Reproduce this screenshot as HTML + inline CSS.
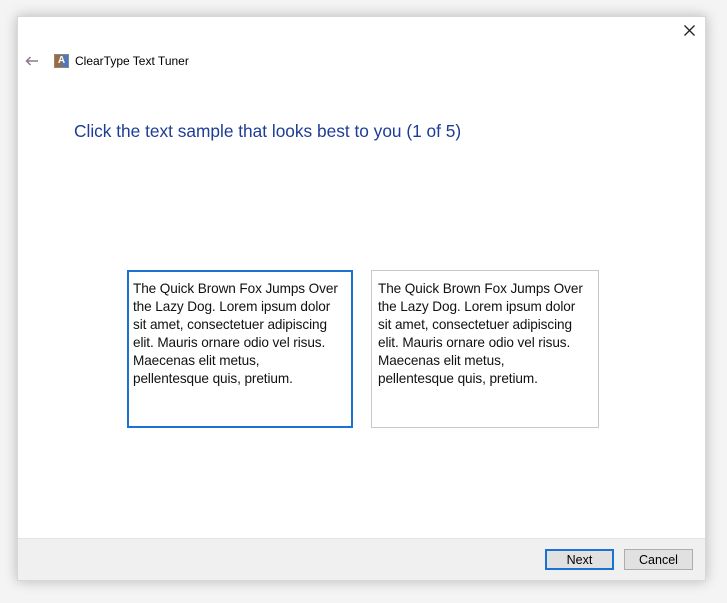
<!DOCTYPE html>
<html><head><style>
body{margin:0;width:727px;height:603px;background:#f4f4f4;position:relative;overflow:hidden;font-family:"Liberation Sans",sans-serif}
.win{position:absolute;left:17px;top:16px;width:689px;height:565px;background:#fff;box-shadow:0 0 12px rgba(0,0,0,.25);border:1px solid #d8d8d8;box-sizing:border-box}
.foot{position:absolute;left:0;right:0;bottom:0;height:41px;background:#f0f0f0;border-top:1px solid #e3e3e3}
.t{position:absolute;white-space:nowrap}
.box{position:absolute;top:270px;height:158px;box-sizing:border-box;padding:9px 0 0 5px;font-size:13.6px;line-height:18px;color:#111;white-space:nowrap;letter-spacing:-0.1px}
.btn{position:absolute;top:549px;width:69px;height:21px;box-sizing:border-box;background:#e1e1e1;font-size:12.5px;text-align:center;line-height:18px;color:#000}
</style></head><body>
<div class="win"><div class="foot"></div></div>
<svg style="position:absolute;left:684px;top:25px" width="11" height="11"><path d="M0.5 0.5L10.5 10.5M10.5 0.5L0.5 10.5" stroke="#222" stroke-width="1.3"/></svg>
<svg style="position:absolute;left:25px;top:56px" width="14" height="10"><path d="M13 5H1.5M5.5 1L1.5 5L5.5 9" stroke="#8a7a8a" stroke-width="1.5" fill="none"/></svg>
<div style="position:absolute;left:54px;top:54px;width:13px;height:12px;background:linear-gradient(90deg,#b5651d,#3a7bd5);border:1px solid #888;color:#fff;font-size:10px;font-weight:bold;text-align:center;line-height:12px">A</div>
<div class="t" style="left:75px;top:54px;font-size:12px;color:#000">ClearType Text Tuner</div>
<div class="t" style="left:74px;top:121px;font-size:17.3px;color:#1e3c96">Click the text sample that looks best to you (1 of 5)</div>
<div class="box" style="left:127px;width:226px;border:2px solid #1a73d2;padding-left:4px;padding-top:8px">The Quick Brown Fox Jumps Over<br>the Lazy Dog. Lorem ipsum dolor<br>sit amet, consectetuer adipiscing<br>elit. Mauris ornare odio vel risus.<br>Maecenas elit metus,<br>pellentesque quis, pretium.</div>
<div class="box" style="left:371px;width:228px;border:1px solid #c8c8c8;padding-left:6px">The Quick Brown Fox Jumps Over<br>the Lazy Dog. Lorem ipsum dolor<br>sit amet, consectetuer adipiscing<br>elit. Mauris ornare odio vel risus.<br>Maecenas elit metus,<br>pellentesque quis, pretium.</div>
<div class="btn" style="left:545px;border:2px solid #1a73d2;line-height:19px">Next</div>
<div class="btn" style="left:624px;border:1px solid #adadad;line-height:20px">Cancel</div>
</body></html>
